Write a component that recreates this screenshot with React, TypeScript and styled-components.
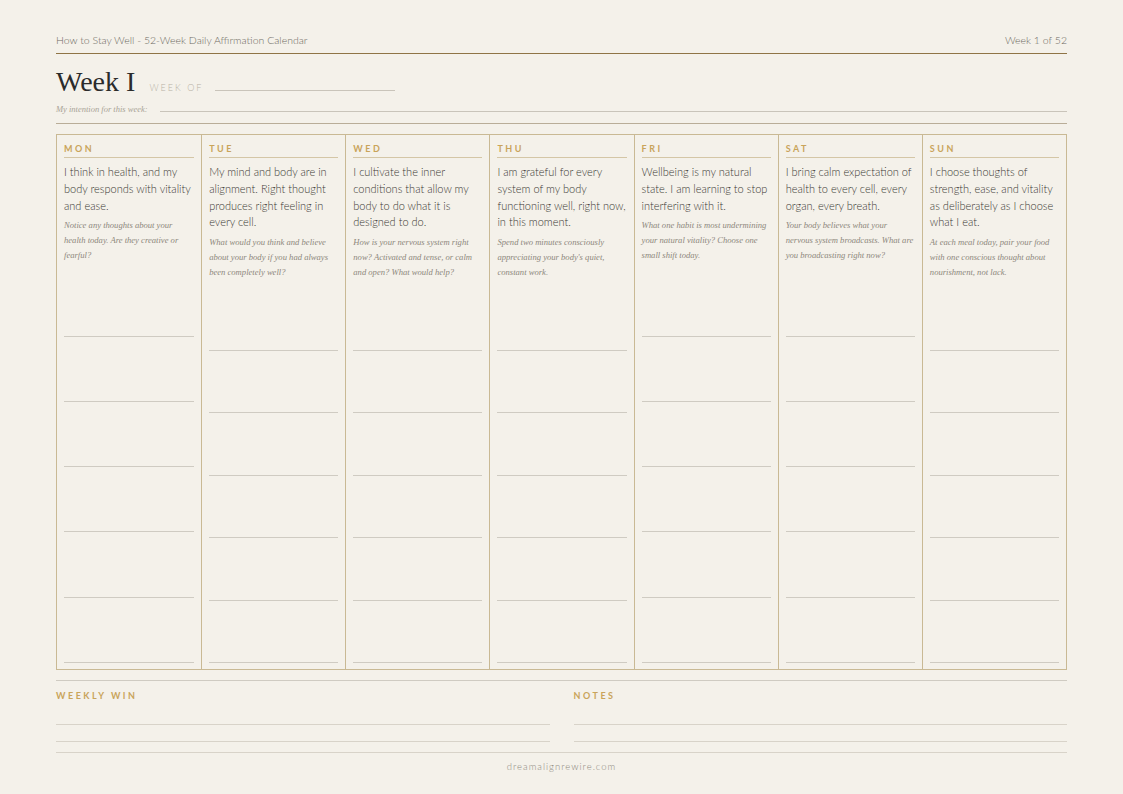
import styled, { createGlobalStyle } from 'styled-components';

const Global = createGlobalStyle`
  html, body { margin: 0; padding: 0; background: #f4f1ea; }
  body { font-family: Lato, "Liberation Sans", sans-serif; }
`;

const Page = styled.div`
  width: 1123px;
  height: 794px;
  box-sizing: border-box;
  padding: 34px 56px 0;
  display: flex;
  flex-direction: column;
`;

const TopBar = styled.div`
  display: flex;
  justify-content: space-between;
  font-size: 10.5px;
  font-weight: 300;
  color: #6e6a62;
  padding-bottom: 7px;
  border-bottom: 1px solid #8f7446;
`;

const TitleRow = styled.div`
  display: flex;
  align-items: baseline;
  margin-top: 12px;
`;

const Title = styled.h1`
  margin: 0;
  font-family: "Liberation Serif", serif;
  font-weight: 400;
  font-size: 28px;
  color: #2b2b2b;
`;

const WeekOf = styled.span`
  margin-left: 14px;
  font-size: 9px;
  font-weight: 300;
  letter-spacing: 2px;
  color: #b8b2a6;
`;

const Blank = styled.span<{ $w?: string }>`
  display: inline-block;
  width: ${(p) => p.$w || '180px'};
  border-bottom: 1px solid #c9c4ba;
  margin-left: 12px;
  flex: ${(p) => (p.$w ? '0 0 auto' : '1')};
`;

const IntentionRow = styled.div`
  display: flex;
  align-items: baseline;
  margin-top: 6px;
  padding-bottom: 9px;
  border-bottom: 1px solid #b9ad98;
`;

const Intention = styled.span`
  font-family: "Liberation Serif", serif;
  font-style: italic;
  font-size: 8.5px;
  color: #a9a396;
`;

const Grid = styled.div`
  margin-top: 10px;
  height: 536px;
  display: grid;
  grid-template-columns: repeat(7, 1fr);
  border: 1px solid #c9b994;
  box-sizing: border-box;
`;

const Col = styled.div`
  display: flex;
  flex-direction: column;
  padding: 8px 7px 6px;
  border-left: 1px solid #c9b994;
  &:first-child { border-left: none; }
`;

const Day = styled.div`
  font-size: 9px;
  font-weight: 700;
  letter-spacing: 2.5px;
  color: #c9a45a;
  padding-bottom: 3px;
  border-bottom: 1px solid #d4c6a6;
`;

const Affirm = styled.p`
  margin: 6px 0 0;
  font-size: 11px;
  font-weight: 300;
  line-height: 16.8px;
  color: #3a3833;
`;

const Prompt = styled.p`
  margin: 4px 0 0;
  font-family: "Liberation Serif", serif;
  font-style: italic;
  font-size: 8.6px;
  line-height: 15px;
  color: #8d877c;
`;

const Lines = styled.div`
  flex: 1;
  display: flex;
  flex-direction: column;
  margin-top: 8px;
`;

const Line = styled.div`
  flex: 1;
  border-bottom: 1px solid #cfcbc2;
`;

const Bottom = styled.div`
  margin-top: 10px;
  border-top: 1px solid #cfcbc2;
  border-bottom: 1px solid #d8d3c9;
  display: grid;
  grid-template-columns: 1fr 1fr;
  gap: 24px;
  padding: 9px 0 10px;
`;

const Label = styled.div`
  font-size: 9px;
  font-weight: 700;
  letter-spacing: 2.5px;
  color: #c9a45a;
`;

const WriteLine = styled.div<{ $first?: boolean }>`
  height: ${(p) => (p.$first ? '23px' : '16px')};
  border-bottom: 1px solid #d8d3c9;
`;

const Footer = styled.div`
  text-align: center;
  font-size: 9.5px;
  font-weight: 300;
  letter-spacing: 1px;
  color: #8f8a80;
  margin-top: 8px;
`;

const days = [
  ['MON', 'I think in health, and my body responds with vitality and ease.', 'Notice any thoughts about your health today. Are they creative or fearful?'],
  ['TUE', 'My mind and body are in alignment. Right thought produces right feeling in every cell.', 'What would you think and believe about your body if you had always been completely well?'],
  ['WED', 'I cultivate the inner conditions that allow my body to do what it is designed to do.', 'How is your nervous system right now? Activated and tense, or calm and open? What would help?'],
  ['THU', 'I am grateful for every system of my body functioning well, right now, in this moment.', "Spend two minutes consciously appreciating your body's quiet, constant work."],
  ['FRI', 'Wellbeing is my natural state. I am learning to stop interfering with it.', 'What one habit is most undermining your natural vitality? Choose one small shift today.'],
  ['SAT', 'I bring calm expectation of health to every cell, every organ, every breath.', 'Your body believes what your nervous system broadcasts. What are you broadcasting right now?'],
  ['SUN', 'I choose thoughts of strength, ease, and vitality as deliberately as I choose what I eat.', 'At each meal today, pair your food with one conscious thought about nourishment, not lack.'],
];

export default function App() {
  return (
    <Page>
      <Global />
      <TopBar>
        <span>How to Stay Well - 52-Week Daily Affirmation Calendar</span>
        <span>Week 1 of 52</span>
      </TopBar>
      <TitleRow>
        <Title>Week I</Title>
        <WeekOf>WEEK OF</WeekOf>
        <Blank $w="180px" />
      </TitleRow>
      <IntentionRow>
        <Intention>My intention for this week:</Intention>
        <Blank />
      </IntentionRow>
      <Grid>
        {days.map(([d, a, p]) => (
          <Col key={d}>
            <Day>{d}</Day>
            <Affirm>{a}</Affirm>
            <Prompt>{p}</Prompt>
            <Lines>
              {[0, 1, 2, 3, 4, 5].map((i) => <Line key={i} />)}
            </Lines>
          </Col>
        ))}
      </Grid>
      <Bottom>
        <div>
          <Label>WEEKLY WIN</Label>
          <WriteLine $first />
          <WriteLine />
        </div>
        <div>
          <Label>NOTES</Label>
          <WriteLine $first />
          <WriteLine />
        </div>
      </Bottom>
      <Footer>dreamalignrewire.com</Footer>
    </Page>
  );
}
